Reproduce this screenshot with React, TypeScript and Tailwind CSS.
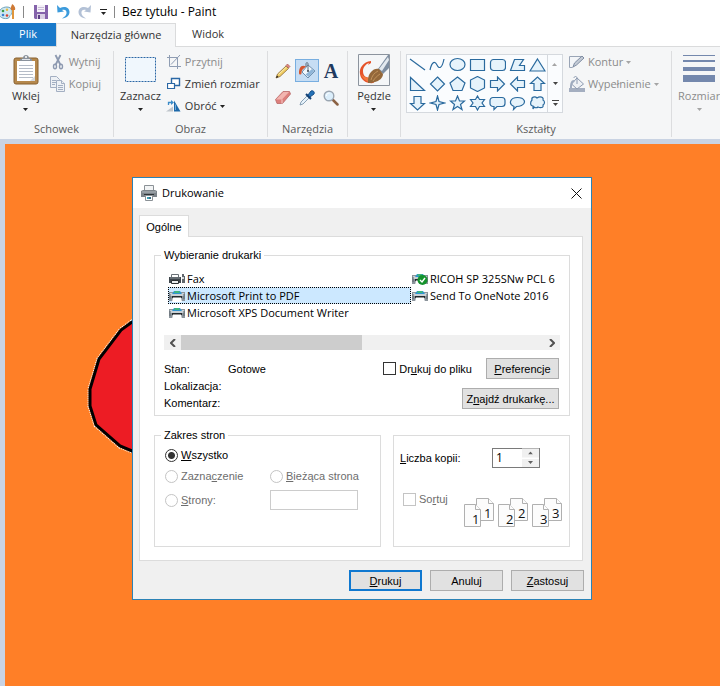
import { useState } from 'react'
import type { ReactNode } from 'react'
import clsx from 'clsx'

const SHAPES: ReactNode[] = [
  <path d="M1 2 16 13" />,
  <path fill="none" d="M1 13C3 4 6 4 8 8s5 4 7-6" />,
  <ellipse cx="8.5" cy="7.5" rx="7.5" ry="6" />,
  <path d="M1.500 2.500h14v11h-14z" />,
  <rect x="1.5" y="2.500" width="15" height="11" rx="3" />,
  <path d="M1.500 13.500 5.500 2.500h9l-4 6h5v5z" />,
  <path d="M8.500 2 16 14H1z" />,
  <path d="M1.500 1.500v13h14z" />,
  <path d="M8.500 1 15.500 8l-7 7-7-7z" />,
  <path d="M8.500 1 16 7l-3 7.500H4L1 7z" />,
  <path d="M8.500.5 15.500 4v8l-7 3.500-7-3.500V4z" />,
  <path d="M1.500 4.500h7v-3.500l7 7-7 7v-3.500h-7z" />,
  <path d="M15.500 4.500h-7v-3.500l-7 7 7 7v-3.500h7z" />,
  <path d="M5 14.500v-7H1.500l7-6.500 7 6.500H12v7z" />,
  <path d="M5 1.500v7H1.500l7 6.500 7-6.500H12v-7z" />,
  <path d="M8.500 1 10 6.500l5.500 1.500-5.500 1.500-1.500 5.500L7 9.500 1.500 8 7 6.500z" />,
  <path d="M8.500 1 10.500 6h5l-4 3.500 1.500 5-4.500-3-4.500 3 1.500-5-4-3.500h5z" />,
  <path d="M8.500 1 10.500 4.500h5l-2.500 3.500 2.500 3.500h-5L8.500 15l-2-3.500h-5L4 8 1.500 4.500h5z" />,
  <path d="M4 2.500h9a3 3 0 0 1 3 3v3a3 3 0 0 1-3 3H8l-3 3v-3H4a3 3 0 0 1-3-3v-3a3 3 0 0 1 3-3z" />,
  <path d="M5 11.500C-1 9 1 2.500 8.500 2.500s9 5.500 4 8c-2 1-4 1-5 1l-3 3z" />,
  <path d="M3 5c-1-3 3-4 5-2 3-2 7-1 6 2 2 1 2 4 0 5 1 3-3 3-5 2-1 1-3 1-4 0l-1 2v-3c-3 0-3-4-1-6z" />,
]

const PRINTERS = [
  { name: 'Fax', kind: 'fax' },
  { name: 'Microsoft Print to PDF', kind: 'printer' },
  { name: 'Microsoft XPS Document Writer', kind: 'printer' },
  { name: 'RICOH SP 325SNw PCL 6', kind: 'default' },
  { name: 'Send To OneNote 2016', kind: 'printer' },
]

const BLOB = 'M127 178l-11 8-22 29-9 30v17l6 19 24 21 12 5h60V178z'

function Caret({ className = 'text-[#222]' }: { className?: string }) {
  return (
    <svg className={clsx('shrink-0', className)} width="5" height="3" viewBox="0 0 5 3" fill="currentColor">
      <path d="M0 0h5L2.500 3z" />
    </svg>
  )
}

function PaletteIcon() {
  return (
    <svg width="17" height="17" viewBox="0 0 17 17">
      <path d="M7 4C2 4-1 7-1 10.500s4 5.500 8 5c3 0 2-3 4-4s2-7.500-4-7.500z" fill="#cfe8f2" stroke="#6fa3ba" />
      <circle cx="3" cy="8" r="1.300" fill="#3d9a46" />
      <circle cx="7" cy="6.800" r="1.200" fill="#e8b93a" />
      <circle cx="3" cy="12" r="1.300" fill="#3c7fd0" />
      <circle cx="7" cy="12.500" r="1.300" fill="#d8442f" />
      <path d="M13 7v9" stroke="#e0963c" strokeWidth="2" />
      <path d="M11 7c-1-3 1-4 1-6 2 1 4 4 3 6z" fill="#cf7a35" />
    </svg>
  )
}

function SaveIcon() {
  return (
    <svg width="14" height="14" viewBox="0 0 14 14">
      <path d="M0 0h14v14H1l-1-1z" fill="#8563ab" />
      <path d="M3 0h8v7H3z" fill="#f4f1f8" />
      <path d="M4 2.500h6M4 4.500h6" stroke="#c9bdd8" />
      <path d="M3 9h8v5H3z" fill="#d9d0e4" />
      <path d="M4 10h2v4H4z" fill="#5d3f85" />
    </svg>
  )
}

function UndoIcon({ color, flip }: { color: string; flip?: boolean }) {
  return (
    <svg className={clsx(flip && '-scale-x-100')} width="14" height="14" viewBox="0 0 14 14">
      <path d="M1 0l.5 7.500L8 6.500 6 5c3-1 5 .5 4.500 3.500-.4 2-2 3.500-4.500 5 4.500-.5 7.500-3 7.500-6.500 0-4.500-5-6.500-9.500-4z" fill={color} />
    </svg>
  )
}

function ClipboardIcon() {
  return (
    <svg width="26" height="31" viewBox="0 0 26 31">
      <rect x="1" y="4" width="24" height="26" rx="2" fill="#b5884c" stroke="#88602f" />
      <path d="M4 7h18v20H4z" fill="#fff" />
      <path d="M6 11.500h14M6 14.500h14M6 17.500h14M6 20.500h14M6 23.500h14" stroke="#b5bcc7" />
      <path d="M17 27h5v-5z" fill="#d5d9de" />
      <path d="M7 7V5l3-1c0-4 6-4 6 0l3 1v2z" fill="#8a929c" />
      <path d="M9 5.500h8" stroke="#dfe3e8" />
      <circle cx="13" cy="3" r="1" fill="#fff" />
    </svg>
  )
}

function ScissorsIcon() {
  return (
    <svg width="16" height="16" viewBox="0 0 16 16" fill="none" stroke="#8d99b0">
      <path d="M5.500 1l5 10M10.500 1 5.500 11" strokeWidth="1.800" />
      <ellipse cx="5" cy="12.500" rx="1.500" ry="2.300" strokeWidth="1.400" />
      <ellipse cx="11" cy="12.500" rx="1.500" ry="2.300" strokeWidth="1.400" />
    </svg>
  )
}

function CopyIcon() {
  return (
    <svg width="16" height="16" viewBox="0 0 16 16" fill="#eef1f5" stroke="#a3afc2">
      <path d="M.5.500h6l3 3v8h-9z" />
      <path d="M2 4.500h4M2 6.500h4M2 8.500h3" />
      <path d="M6.500 4.500h5l3 3v8h-8z" />
      <path d="M11.500 4.500v3h3M8 9.500h5M8 11.500h5M8 13.500h5" />
    </svg>
  )
}

function SelectIcon() {
  return (
    <svg width="31" height="25" viewBox="0 0 31 25">
      <path d="M.5.500h30v24H.5z" fill="#f0f7fd" stroke="#2a67a5" strokeDasharray="2 1" />
    </svg>
  )
}

function CropIcon() {
  return (
    <svg width="14" height="14" viewBox="0 0 14 14" fill="none" stroke="#8f9db3">
      <path d="M2.500 0v11.500H14M0 2.500h10.500V14M4 9.500 13 0" />
    </svg>
  )
}

function ResizeIcon() {
  return (
    <svg width="14" height="14" viewBox="0 0 14 14" fill="#fff" stroke="#2a67a5">
      <path d="M4.500 1.500h8v7h-8z" strokeWidth="1.400" />
      <path d="M.5 6.500h7v5h-7z" strokeWidth="1.200" />
    </svg>
  )
}

function RotateIcon() {
  return (
    <svg width="15" height="14" viewBox="0 0 15 14">
      <path d="M0 12.500 7 7.500v5z" fill="#bfc5cc" />
      <path d="M8 12.500V1.500l6.500 11z" fill="#1d69aa" />
      <path d="M9.500 11V5.500" stroke="#71a9d5" />
      <path d="M2.500 6V3.500H6" fill="none" stroke="#3b8bc8" strokeWidth="1.300" />
      <path d="M5 1l3 2.500L5 6z" fill="#3b8bc8" />
    </svg>
  )
}

function PencilIcon() {
  return (
    <svg width="16" height="16" viewBox="0 0 16 16">
      <path d="M1 15l1.500-4 8.500-8 2.500 2.500-8.500 8z" fill="#f0cd62" stroke="#8d6a35" strokeWidth=".8" />
      <path d="M3.500 11.500l8-7.500" fill="none" stroke="#fbeeb5" />
      <path d="M11 2.500l1.500-1.500 2.500 2.500-1.500 1.500z" fill="#e08a80" stroke="#a04a45" strokeWidth=".6" />
      <path d="M1 15l1-2.500L3.500 14z" fill="#222" />
    </svg>
  )
}

function FillIcon() {
  return (
    <svg width="18" height="17" viewBox="0 0 18 17">
      <path d="M10 3l7 6-7 7-6-6z" fill="#f1f7fc" stroke="#6f8fae" />
      <path d="M10.500 15l6-6-2.500-2-6.500 5.500z" fill="#8fb5d8" />
      <path d="M10 9V2c0-2-2-2-2 0v3" fill="none" stroke="#5f6c7a" />
      <circle cx="10" cy="9" r="1" fill="#3f4a56" />
      <path d="M8 4.500C3 2 1 6 1 11c0 2 2.500 2 2.500 0C3.500 8 5 7 8 4.500z" fill="#d5562f" />
    </svg>
  )
}

function EraserIcon() {
  return (
    <svg width="17" height="15" viewBox="0 0 17 15">
      <path d="M.5 9.500 8 1.500h6.500l1 2.500-8 9.500H2z" fill="#dd7f7c" stroke="#b96a68" strokeWidth=".8" />
      <path d="M1 9.500 8.500 2H14l-7 7.500z" fill="#f2b5b0" />
      <path d="M7 9.500v4" stroke="#f6cfcb" />
    </svg>
  )
}

function PipetteIcon() {
  return (
    <svg width="16" height="16" viewBox="0 0 16 16">
      <path d="M1 15l1-3 6-6 2 2-6 6z" fill="#e6f2fb" stroke="#6f8ba3" strokeWidth=".8" />
      <path d="M7 4l5 5" stroke="#123f74" strokeWidth="2" />
      <path d="M9 5l3-4c2-1 4 1 3 3l-4 3z" fill="#2472b8" stroke="#174e87" />
    </svg>
  )
}

function MagnifierIcon() {
  return (
    <svg width="16" height="16" viewBox="0 0 16 16">
      <path d="M10 10l4.500 4.500" stroke="#8b6244" strokeWidth="2.500" strokeLinecap="round" />
      <circle cx="6" cy="6" r="4.800" fill="#dbeefb" stroke="#9aa5b1" strokeWidth="1.400" />
      <path d="M3.500 6c0-2 1-3 3-3" fill="none" stroke="#fff" />
    </svg>
  )
}

function BrushIcon() {
  return (
    <svg width="32" height="32" viewBox="0 0 32 32">
      <path d="M.5.500h31v31H.5z" fill="#f4f6f8" stroke="#8c949e" />
      <path d="M13 7C5 8 1 14 2 20c1 6 6 10 14 9l-3-5c-5 0-8-2-8-7 0-4 3-7 6-8l-1 2 3-2z" fill="#e5532a" />
      <path d="M3 20c2 6 7 9 13 8l-3-4c-4 0-7-1-10-4z" fill="#f1793e" />
      <path d="M20 15 30 1h1v13l-6 6z" fill="#7d8da0" />
      <path d="M21 15 30 3l1 3-7 11z" fill="#e3e9ef" />
      <path d="M10 29c0-4 0-8 3-11 2-3 6-4 8-3l4 5c0 4-4 7-8 8-3 1-5 1-7 1z" fill="#94683a" />
      <path d="M13 26c1-4 3-7 7-9M15 27c2-3 4-5 7-7" fill="none" stroke="#c2935b" />
    </svg>
  )
}

function OutlineIcon() {
  return (
    <svg width="16" height="14" viewBox="0 0 16 14">
      <path d="M12 1.500H.5v11h3L12 4z" fill="#f3f5f8" stroke="#9aa5b6" />
      <path d="M4 12l1.500-4 7.500-7 2 2-7.500 7z" fill="#c3cad5" stroke="#7f8da3" />
    </svg>
  )
}

function BucketIcon() {
  return (
    <svg width="16" height="16" viewBox="0 0 16 16">
      <path d="M0 12h16v4H0z" fill="#a4aec0" />
      <path d="M8 2l6.500 6L8 13 2.500 8z" fill="#eef1f5" stroke="#8d9ab0" />
      <path d="M8 8V2c0-2-3-2-3 0" fill="none" stroke="#8d9ab0" />
      <path d="M5 4C2 4 1 7 1 12h2c0-3 0-5 3-7z" fill="#9eabbf" />
    </svg>
  )
}

function WidthIcon() {
  return (
    <svg width="32" height="32" viewBox="0 0 32 32" fill="#7488ad">
      <path d="M0 1h32v1H0zM0 6h32v2H0zM0 13h32v4H0zM0 21h32v7H0z" />
    </svg>
  )
}

function DialogPrinterIcon() {
  return (
    <svg width="16" height="16" viewBox="0 0 16 16">
      <path d="M3.500.500h9v6h-9z" fill="#f2f4f5" stroke="#8b9196" />
      <path d="M0 6l2-1h12l2 1v6H0z" fill="#7d848a" />
      <path d="M1 7h14" stroke="#b4babf" />
      <path d="M3 9h10v1H3z" fill="#2f3437" />
      <path d="M4.500 10.500h7v5h-7z" fill="#fff" stroke="#8b9196" />
      <path d="M6 12h2v2H6z" fill="#3ba0b5" />
      <path d="M8 12h2v2H8z" fill="#3c6f86" />
    </svg>
  )
}

function PrinterIcon({ kind }: { kind: string }) {
  if (kind === 'fax') {
    return (
      <svg className="shrink-0" width="16" height="12" viewBox="0 0 16 12">
        <path d="M2.500 1.500h7v3h-7z" fill="#fff" stroke="#6a7177" />
        <path d="M0 4h12v6H0z" fill="#3f464c" />
        <path d="M1 5h10" stroke="#8c9399" />
        <path d="M2.500 7.500h7v3h-7z" fill="#e8ebed" stroke="#2b3034" />
        <path d="M13 1h2v2h1v7h-3z" fill="#5f666c" />
        <path d="M13 4h2v2h-2z" fill="#d5d9dc" />
      </svg>
    )
  }
  return (
    <svg className="shrink-0" width="16" height="12" viewBox="0 0 16 12">
      <path d="M0 2h16v9H0z" fill="#8b949b" />
      <path d="M1 3h14v3H1z" fill="#c9d0d5" />
      <path d="M3 4 5 1h6l2 3z" fill="#2f95d0" />
      <path d="M6 1h4l1 2H5z" fill="#3fb67c" />
      <path d="M1 4v5M15 4v5" stroke="#5d666d" />
      <path d="M3 6h10v2H3z" fill="#24292d" />
      <path d="M4 7.500 3 12h10l-1-4.500z" fill="#fff" />
      {kind === 'default' && (
        <>
          <circle cx="10.500" cy="7" r="5" fill="#14932c" />
          <path d="M8 7l2 2 3-4" fill="none" stroke="#fff" strokeWidth="1.400" />
        </>
      )}
    </svg>
  )
}

function CollateIcon({ n }: { n: string }) {
  return (
    <svg width="30" height="30" viewBox="0 0 30 30" fill="#fcfcfc" stroke="#b0b0b0">
      <path d="M12.500.500h12l5 5v17h-17z" />
      <path d="M24.500.500v5h5" />
      <path d="M.5 6.500h11l5 5v17H.5z" />
      <path d="M11.500 6.500v5h5" />
      <g fill="#111" stroke="none" fontSize="13" fontFamily="Open Sans, sans-serif">
        <text x="20" y="20">{n}</text>
        <text x="8" y="26">{n}</text>
      </g>
    </svg>
  )
}

function Group({ label, className, bodyClass, children }: { label?: string; className?: string; bodyClass?: string; children: ReactNode }) {
  return (
    <section className={clsx('mt-1 mb-[2px] flex shrink-0 flex-col justify-between border-r border-[#dcdddf]', className)}>
      <div className={clsx('flex items-start', bodyClass)}>{children}</div>
      <div className="h-4 text-center leading-4 text-[#5a5a5a]">{label}</div>
    </section>
  )
}

function BigButton({ icon, label, disabled }: { icon: ReactNode; label: string; disabled?: boolean }) {
  return (
    <button disabled={disabled} className="flex flex-col items-center text-[#333] disabled:text-[#8b8b8b]">
      <span className="flex h-[37px] items-center">{icon}</span>
      <span className="leading-4">{label}</span>
      <Caret className={clsx('mt-1', disabled ? 'text-[#a5a5a5]' : 'text-[#222]')} />
    </button>
  )
}

function SmallButton({ icon, label, disabled, menu }: { icon: ReactNode; label: string; disabled?: boolean; menu?: boolean }) {
  return (
    <button disabled={disabled} className="flex h-[22px] items-center gap-[3px] whitespace-nowrap text-[#333] disabled:text-[#8b8b8b]">
      <span className="flex w-4 justify-center">{icon}</span>
      <span>{label}</span>
      {menu && <Caret className={disabled ? 'text-[#a5a5a5]' : 'text-[#222]'} />}
    </button>
  )
}

function Tool({ label, active, children }: { label: string; active?: boolean; children: ReactNode }) {
  return (
    <button
      aria-label={label}
      className={clsx('flex h-[23px] w-6 items-center justify-center border', active ? 'border-[#78aee0] bg-[#c6ddf4]' : 'border-transparent')}
    >
      {children}
    </button>
  )
}

function Ribbon() {
  return (
    <div className="flex h-[92px] overflow-hidden bg-[#f5f6f7]">
      <Group label="Schowek" className="w-[114px]" bodyClass="pl-3">
        <BigButton icon={<ClipboardIcon />} label="Wklej" />
        <div className="ml-[10px]">
          <SmallButton icon={<ScissorsIcon />} label="Wytnij" disabled />
          <SmallButton icon={<CopyIcon />} label="Kopiuj" disabled />
        </div>
      </Group>
      <Group label="Obraz" className="w-[154px]" bodyClass="pl-[6px]">
        <BigButton icon={<SelectIcon />} label="Zaznacz" />
        <div className="ml-[5px]">
          <SmallButton icon={<CropIcon />} label="Przytnij" disabled />
          <SmallButton icon={<ResizeIcon />} label="Zmień rozmiar" />
          <SmallButton icon={<RotateIcon />} label="Obróć" menu />
        </div>
      </Group>
      <Group label="Narzędzia" className="w-20" bodyClass="pl-[3px]">
        <div className="grid grid-cols-3 gap-y-1 pt-2">
          <Tool label="Ołówek"><PencilIcon /></Tool>
          <Tool label="Wypełnij kolorem" active><FillIcon /></Tool>
          <Tool label="Tekst"><span className="font-['Liberation_Serif',serif] text-xl leading-5 font-bold text-[#1f3a60]">A</span></Tool>
          <Tool label="Gumka"><EraserIcon /></Tool>
          <Tool label="Selektor kolorów"><PipetteIcon /></Tool>
          <Tool label="Lupa"><MagnifierIcon /></Tool>
        </div>
      </Group>
      <Group className="w-[53px] items-center">
        <BigButton icon={<BrushIcon />} label="Pędzle" />
      </Group>
      <Group label="Kształty" className="w-[271px]" bodyClass="pl-[5px]">
        <div className="mt-[3px] flex border border-[#d5d9de] bg-[#fafcfe]">
          <div className="grid grid-cols-7 border-r border-[#d5d9de]">
            {SHAPES.map((shape, i) => (
              <button key={i} aria-label={`Kształt ${i + 1}`} className="flex h-[19px] w-5 items-center justify-center">
                <svg width="17" height="16" viewBox="0 0 17 16" fill="#e6f3fb" stroke="#2a6a9e" strokeWidth="1.200">{shape}</svg>
              </button>
            ))}
          </div>
          <div className="flex w-[14px] flex-col">
            <button aria-label="W górę" className="flex flex-1 rotate-180 items-center justify-center"><Caret className="text-[#a5a5a5]" /></button>
            <button aria-label="W dół" className="flex flex-1 items-center justify-center"><Caret className="text-[#444]" /></button>
            <button aria-label="Więcej" className="flex flex-1 flex-col items-center justify-center gap-[2px]">
              <span className="h-px w-[7px] bg-[#444]" />
              <Caret className="text-[#444]" />
            </button>
          </div>
        </div>
        <div className="ml-[6px]">
          <SmallButton icon={<OutlineIcon />} label="Kontur" disabled menu />
          <SmallButton icon={<BucketIcon />} label="Wypełnienie" disabled menu />
        </div>
      </Group>
      <Group bodyClass="pl-[6px]">
        <BigButton icon={<WidthIcon />} label="Rozmiar" disabled />
      </Group>
    </div>
  )
}

const CHECK =
  'size-[13px] shrink-0 appearance-none border border-[#333] bg-white disabled:border-[#c4c4c4]'
const RADIO =
  'size-[13px] shrink-0 appearance-none rounded-full border border-[#333] bg-white checked:bg-[radial-gradient(circle,#333_3px,#fff_4px)] disabled:border-[#c4c4c4]'
const LABEL = 'flex items-center gap-[3px] has-disabled:text-[#6d6d6d]'

function DialogButton({ primary, className, children }: { primary?: boolean; className?: string; children: ReactNode }) {
  return (
    <button
      className={clsx(
        'flex h-[21px] items-center justify-center bg-[#e1e1e1]',
        primary ? 'border-2 border-[#0f78d0]' : 'border border-[#adadad]',
        className ?? 'w-[73px]',
      )}
    >
      <span>{children}</span>
    </button>
  )
}

function PrintDialog() {
  const [selected, setSelected] = useState('Microsoft Print to PDF')
  const [copies, setCopies] = useState(1)

  return (
    <div
      role="dialog"
      aria-labelledby="print-title"
      className="absolute top-[177px] left-[132px] w-[460px] border border-[#2b82b5] bg-[#f0f0f0] px-[6px] pb-2 font-['Liberation_Sans',sans-serif] text-[11px] leading-[14px] text-black"
    >
      <header className="-mx-[6px] flex h-[30px] items-center bg-white px-2 font-['Open_Sans',sans-serif]">
        <DialogPrinterIcon />
        <h2 id="print-title" className="ml-[5px] flex-1">Drukowanie</h2>
        <button aria-label="Zamknij" className="mr-px">
          <svg width="11" height="11" viewBox="0 0 11 11" stroke="#111"><path d="M.5.500l10 10M10.500.500l-10 10" /></svg>
        </button>
      </header>

      <div className="mt-[7px] flex">
        <button role="tab" aria-selected="true" className="relative -mb-px h-[22px] w-[50px] border border-b-0 border-[#dcdcdc] bg-white">
          Ogólne
        </button>
      </div>

      <div className="mr-[2px] border border-[#dcdcdc] bg-white pt-[11px] pr-3 pb-[13px] pl-[14px]">
        <fieldset className="border border-[#dcdcdc] px-[9px] pb-1">
          <legend className="-ml-[3px] px-[3px]">Wybieranie drukarki</legend>
          <ul role="listbox" className="mt-2 grid grid-flow-col grid-cols-[243px_1fr] grid-rows-3 pl-1 font-['Open_Sans',sans-serif]">
            {PRINTERS.map(p => (
              <li
                key={p.name}
                role="option"
                aria-selected={p.name === selected}
                onClick={() => setSelected(p.name)}
                className={clsx(
                  'flex h-[17px] items-center gap-[2px] border border-dotted whitespace-nowrap',
                  p.name === selected ? 'border-black bg-[#cce8ff]' : 'border-transparent',
                )}
              >
                <PrinterIcon kind={p.kind} />
                {p.name}
              </li>
            ))}
          </ul>

          <div className="mt-[14px] flex h-[15px] bg-[#f0f0f0] text-[#505050]">
            <button aria-label="Przewiń w lewo" className="flex w-[17px] items-center justify-center">
              <svg width="6" height="8" viewBox="0 0 6 8" fill="none" stroke="currentColor" strokeWidth="2"><path d="M5 0 1 4l4 4" /></svg>
            </button>
            <div className="flex-1"><div className="h-full w-1/2 bg-[#cdcdcd]" /></div>
            <button aria-label="Przewiń w prawo" className="flex w-[17px] items-center justify-center">
              <svg width="6" height="8" viewBox="0 0 6 8" fill="none" stroke="currentColor" strokeWidth="2"><path d="M1 0l4 4-4 4" /></svg>
            </button>
          </div>

          <div className="mt-2 flex justify-between">
            <dl className="grid auto-rows-[17px] grid-cols-[64px_auto] items-center pt-[2px]">
              <dt>Stan:</dt>
              <dd>Gotowe</dd>
              <dt>Lokalizacja:</dt>
              <dd />
              <dt>Komentarz:</dt>
              <dd />
            </dl>
            <div className="flex flex-col items-end gap-[9px] pr-px">
              <div className="flex items-center gap-[14px]">
                <label className={LABEL}>
                  <input type="checkbox" className={CHECK} />
                  <span>Dr<u>u</u>kuj do pliku</span>
                </label>
                <DialogButton><u>P</u>referencje</DialogButton>
              </div>
              <DialogButton className="w-[97px]">Z<u>n</u>ajdź drukarkę...</DialogButton>
            </div>
          </div>
        </fieldset>

        <div className="mt-3 flex gap-3">
          <fieldset className="h-[119px] w-[227px] border border-[#dcdcdc] px-[10px]">
            <legend className="-ml-1 px-[3px]">Zakres stron</legend>
            <div className="mt-[6px] grid grid-cols-[105px_auto] gap-y-[7px]">
              <label className={clsx(LABEL, 'col-span-2')}>
                <input type="radio" name="range" defaultChecked className={RADIO} />
                <span><u>W</u>szystko</span>
              </label>
              <label className={LABEL}>
                <input type="radio" name="range" disabled className={RADIO} />
                <span>Zazna<u>c</u>zenie</span>
              </label>
              <label className={LABEL}>
                <input type="radio" name="range" disabled className={RADIO} />
                <span><u>B</u>ieżąca strona</span>
              </label>
              <label className={LABEL}>
                <input type="radio" name="range" disabled className={RADIO} />
                <span><u>S</u>trony:</span>
              </label>
              <input type="text" aria-label="Strony" disabled className="h-5 w-[88px] border border-[#cccccc] bg-white px-1" />
            </div>
          </fieldset>

          <fieldset className="mt-[7px] flex-1 border border-[#dcdcdc] pt-3 pr-[7px] pl-[6px]">
            <div className="flex items-center justify-between pr-[22px]">
              <label htmlFor="copies"><u>L</u>iczba kopii:</label>
              <div className="flex h-5 w-12 border border-[#7a7a7a]">
                <input
                  id="copies"
                  type="text"
                  value={copies}
                  onChange={e => setCopies(Number(e.target.value) || 1)}
                  className="w-[29px] bg-white px-[3px] font-['Open_Sans',sans-serif] text-xs outline-none"
                />
                <div className="flex flex-1 flex-col gap-px bg-white">
                  <button aria-label="Więcej kopii" onClick={() => setCopies(copies + 1)} className="flex flex-1 rotate-180 items-center justify-center bg-[#f0f0f0]">
                    <Caret className="text-[#606060]" />
                  </button>
                  <button aria-label="Mniej kopii" onClick={() => setCopies(Math.max(1, copies - 1))} className="flex flex-1 items-center justify-center bg-[#f0f0f0]">
                    <Caret className="text-[#606060]" />
                  </button>
                </div>
              </div>
            </div>
            <div className="mt-[30px] flex items-start justify-between pl-[3px]">
              <label className={clsx(LABEL, '-mt-[6px]')}>
                <input type="checkbox" disabled className={CHECK} />
                <span>So<u>r</u>tuj</span>
              </label>
              <div className="flex gap-1">
                <CollateIcon n="1" />
                <CollateIcon n="2" />
                <CollateIcon n="3" />
              </div>
            </div>
          </fieldset>
        </div>
      </div>

      <footer className="mt-[9px] flex justify-end gap-2 pr-px">
        <DialogButton primary><u>D</u>rukuj</DialogButton>
        <DialogButton>Anuluj</DialogButton>
        <DialogButton><u>Z</u>astosuj</DialogButton>
      </footer>
    </div>
  )
}

export default function App() {
  return (
    <div className="relative flex min-h-screen flex-col overflow-hidden bg-white font-['Open_Sans',sans-serif] text-[11px] text-[#333]">
      {/* Title bar */}
      <header className="flex h-[23px] items-center">
        <PaletteIcon />
        <span className="ml-[6px] h-3 w-px bg-[#888]" />
        <div className="ml-[10px] flex items-center gap-2">
          <button aria-label="Zapisz"><SaveIcon /></button>
          <button aria-label="Cofnij"><UndoIcon color="#3c9bdc" /></button>
          <button aria-label="Ponów"><UndoIcon color="#b3c1d6" flip /></button>
          <button aria-label="Dostosuj" className="flex w-[7px] flex-col items-center gap-[2px]">
            <span className="h-px w-[7px] bg-[#222]" />
            <Caret />
          </button>
        </div>
        <span className="mx-[7px] h-3 w-px bg-[#888]" />
        <h1 className="text-xs text-black">Bez tytułu - Paint</h1>
      </header>

      {/* Tabs */}
      <nav className="flex h-6 border-b border-[#dadbdc]">
        <button className="w-14 bg-[#1979ca] text-white">Plik</button>
        <button className="-mb-px w-[120px] border border-b-0 border-[#dadbdc] bg-[#f5f6f7]">Narzędzia główne</button>
        <button className="w-16">Widok</button>
      </nav>

      <Ribbon />

      {/* Canvas */}
      <main className="flex flex-1 bg-[#c9d3e3] pt-[5px] pl-[5px]">
        <div className="flex-1 bg-[#ff7f27]">
          <svg width="320" height="320" viewBox="0 0 320 320" fill="#ed1c24">
            <path d={BLOB} stroke="#fff" strokeWidth="5" strokeDasharray="1 1" />
            <path d={BLOB} stroke="#000" strokeWidth="3" />
          </svg>
        </div>
      </main>

      <PrintDialog />
    </div>
  )
}
